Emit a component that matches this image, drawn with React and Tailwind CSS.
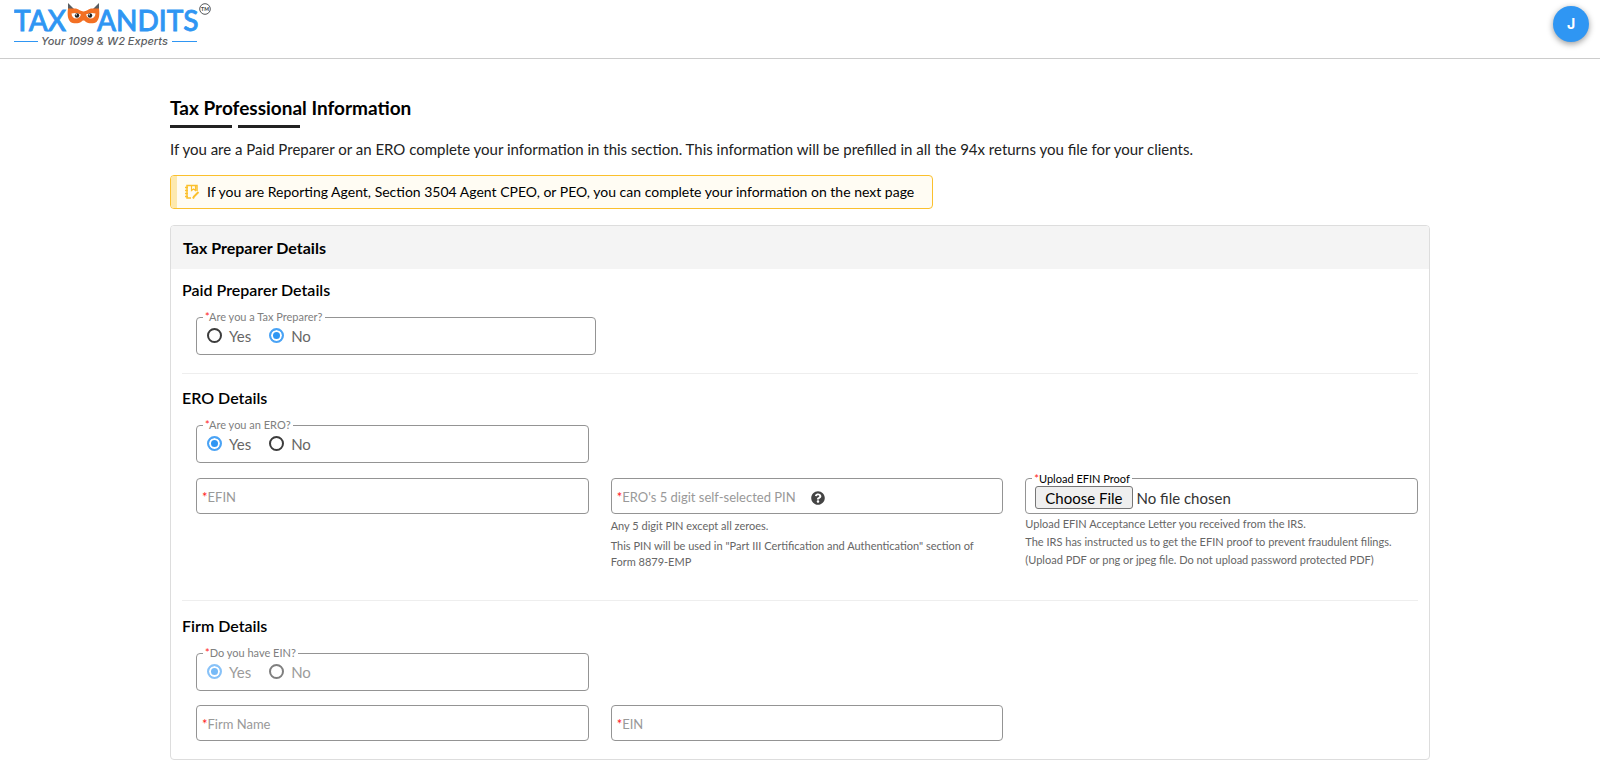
import React, { useState } from 'react';
import { FaQuestionCircle } from 'react-icons/fa';

const Required = () => <span className="text-[#ff1a1a]">*</span>;

const Logo = () => (
  <a href="#" aria-label="TaxBandits home" className="block">
    <svg width="200" height="48" viewBox="0 0 200 48" fontFamily="Lato, sans-serif">
      <g fill="#2f96f3" stroke="#2f96f3" strokeWidth="0.8" fontSize="28" fontWeight="500">
        <text x="0" y="31">TAX</text>
        <text x="83" y="31">ANDITS</text>
      </g>
      {/* owl mask */}
      <path d="M54 3l4 4 2 2h-6zM85 3l-4 4-2 2h6z" fill="#5a5d60" />
      <path
        d="M54 8.500h8c3 .5 4.500 3 7.500 3s4.500-2.500 7.500-3h8c.8 6 .3 10.500-2.500 13.500-1.500 1.500-8.500 1.800-10.500 0-.8-.8-1.500-1.500-2.500-1.500s-1.700.7-2.500 1.500c-2 1.800-9 1.500-10.500 0-2.800-3-3.300-7.500-2.500-13.500z"
        fill="#f37024"
      />
      <path d="M57.500 13.500c3-1 6.500-.8 9.500 1-.8 2.800-2.800 4-4.700 4-2.600 0-4.600-1.700-4.800-5zM81.500 13.500c-3-1-6.500-.8-9.500 1 .8 2.800 2.800 4 4.700 4 2.600 0 4.600-1.700 4.800-5z" fill="#fff" />
      <circle cx="63" cy="15.500" r="2.200" fill="#222" />
      <circle cx="76" cy="15.500" r="2.200" fill="#222" />
      <circle cx="62.200" cy="14.700" r="0.700" fill="#fff" />
      <circle cx="75.200" cy="14.700" r="0.700" fill="#fff" />
      <circle cx="191" cy="9" r="5.300" fill="none" stroke="#55585b" strokeWidth="1" />
      <text x="191" y="11" textAnchor="middle" fontSize="5" fontWeight="900" fill="#44474a">TM</text>
      <path d="M0 41.500h24M158 41.500h25" stroke="#2f96f3" strokeWidth="1" />
      <text x="27" y="45" fontSize="11" fontStyle="italic" fontWeight="500" fontFamily="Inter, sans-serif" fill="#5d6063">
        Your 1099 &amp; W2 Experts
      </text>
    </svg>
  </a>
);

const NoteIcon = () => (
  <svg width="16" height="16" viewBox="0 0 16 16" fill="none" stroke="#fbc02d" strokeWidth="1.500">
    <path d="M13 7V1.500H3V14h4" />
    <path d="M7.500 1v5.500L9.500 5l2 1.500V1" strokeWidth="1.200" />
    <path d="M1 3.500h3M1 6.500h3M1 9.500h3M1 12.500h3" />
    <path d="M9 14.500l1-2 4.500-4.500" strokeWidth="2" />
  </svg>
);

const RadioField = ({ name, label, value, onChange, disabled = false, className = '' }) => (
  <fieldset disabled={disabled} className={`min-w-0 rounded border border-[#949494] pb-2 pl-[10px] ${className}`}>
    <legend className="-ml-1 px-[2px] text-[11px] leading-4 text-[#808080]">
      <Required />{label}
    </legend>
    <div className="flex h-[21px] items-center gap-[18px]">
      {['Yes', 'No'].map((option) => (
        <label key={option} className={`flex items-center gap-[7px] text-[15px] leading-5 text-[#666] ${disabled ? 'opacity-65' : ''}`}>
          <input
            type="radio"
            name={name}
            checked={value === option}
            onChange={() => onChange(option)}
            className="h-[15px] w-[15px] appearance-none rounded-full border-2 border-[#3c3c3c] checked:border-[#4aa3f5] checked:bg-[#2f96f3] checked:shadow-[inset_0_0_0_2px_white]"
          />
          {option}
        </label>
      ))}
    </div>
  </fieldset>
);

const TextField = ({ id, label, children }) => {
  const [value, setValue] = useState('');

  return (
    <div className="relative">
      <input
        id={id}
        type="text"
        value={value}
        onChange={(e) => setValue(e.target.value)}
        className="block h-9 w-full rounded border border-[#949494] px-[6px] text-[13px] focus:border-[#2f96f3] focus:outline-none"
      />
      {!value && (
        <div className="pointer-events-none absolute inset-x-[6px] inset-y-0 flex items-center gap-[15px] pt-1 text-[13px] text-[#999]">
          <label htmlFor={id}>
            <Required />{label}
          </label>
          {children}
        </div>
      )}
    </div>
  );
};

const SectionTitle = ({ children }) => (
  <h3 className="mb-[7px] text-base leading-6 font-semibold text-black">{children}</h3>
);

const App = () => {
  const [preparer, setPreparer] = useState('No');
  const [ero, setEro] = useState('Yes');
  const [hasEin, setHasEin] = useState('Yes');

  return (
    <div className="min-h-screen bg-white font-[Lato,sans-serif] text-black">
      <header className="flex h-[59px] items-start justify-between border-b border-[#ccc] pr-[11px] pl-[14px]">
        <Logo />
        <button
          type="button"
          className="mt-[6px] h-9 w-9 rounded-full bg-[#2f96f3] font-[Inter,sans-serif] text-sm font-bold text-white shadow-[0_2px_6px_rgba(0,0,0,0.4)]"
        >
          J
        </button>
      </header>

      <main className="mx-auto max-w-[1260px] pt-[37px] pb-3">
        <h1 className="text-[19px] leading-6 font-bold">Tax Professional Information</h1>
        <div className="mt-[5px] flex gap-[6px]">
          <span className="h-[3px] w-[62px] bg-[#222]" />
          <span className="h-[3px] w-[62px] bg-[#222]" />
        </div>
        <p className="mt-[9px] text-[15px] leading-6 text-[#222]">
          If you are a Paid Preparer or an ERO complete your information in this section. This information will be
          prefilled in all the 94x returns you file for your clients.
        </p>

        <div className="mt-[14px] flex h-[34px] w-fit items-center overflow-hidden rounded border border-[#fbc02d] bg-[#fffcf3] pr-[18px]">
          <span className="mr-[7px] h-full w-[6px] bg-[#fde9ae]" />
          <NoteIcon />
          <p className="ml-[7px] text-sm leading-5">
            If you are Reporting Agent, Section 3504 Agent CPEO, or PEO, you can complete your information on the next page
          </p>
        </div>

        <div className="mt-4 overflow-hidden rounded border border-[#ddd]">
          <h2 className="bg-[#f4f4f4] px-3 py-[11px] text-base leading-[21px] font-bold">Tax Preparer Details</h2>

          <form className="px-[11px]">
            <section className="border-b border-[#eee] pt-[9px] pb-[18px]">
              <SectionTitle>Paid Preparer Details</SectionTitle>
              <RadioField
                name="preparer"
                label="Are you a Tax Preparer?"
                value={preparer}
                onChange={setPreparer}
                className="ml-[14px] max-w-[400px]"
              />
            </section>

            <section className="border-b border-[#eee] pt-3 pb-[30px]">
              <SectionTitle>ERO Details</SectionTitle>
              <div className="ml-[14px] grid grid-cols-3 gap-x-[22px] gap-y-[15px]">
                <RadioField name="ero" label="Are you an ERO?" value={ero} onChange={setEro} />
                <div className="col-start-1">
                  <TextField id="efin" label="EFIN" />
                </div>
                <div>
                  <TextField id="pin" label="ERO's 5 digit self-selected PIN">
                    <FaQuestionCircle className="text-sm text-[#444]" />
                  </TextField>
                  <div className="mt-1 pr-4 text-[11px] leading-4 text-[#666]">
                    <p>Any 5 digit PIN except all zeroes.</p>
                    <p className="mt-1">
                      This PIN will be used in "Part III Certification and Authentication" section of Form 8879-EMP
                    </p>
                  </div>
                </div>
                <div>
                  <fieldset className="-mt-[7px] min-w-0 rounded border border-[#949494] pb-1 pl-[9px]">
                    <legend className="-ml-[3px] px-[2px] text-[11px] leading-[15px]">
                      <label htmlFor="proof"><Required />Upload EFIN Proof</label>
                    </legend>
                    <input
                      id="proof"
                      type="file"
                      className="block h-[23px] w-full text-[15px] leading-5 text-[#333] file:mr-1 file:h-[23px] file:rounded-[3px] file:border file:border-solid file:border-[#767676] file:bg-[#efefef] file:px-[9px] file:text-black"
                    />
                  </fieldset>
                  <div className="mt-[1px] text-[11px] leading-[18px] text-[#666]">
                    <p>Upload EFIN Acceptance Letter you received from the IRS.</p>
                    <p>The IRS has instructed us to get the EFIN proof to prevent fraudulent filings.</p>
                    <p>(Upload PDF or png or jpeg file. Do not upload password protected PDF)</p>
                  </div>
                </div>
              </div>
            </section>

            <section className="pt-[13px] pb-[18px]">
              <SectionTitle>Firm Details</SectionTitle>
              <div className="ml-[14px] grid grid-cols-3 gap-x-[22px] gap-y-[14px]">
                <RadioField name="ein-choice" label="Do you have EIN?" value={hasEin} onChange={setHasEin} disabled />
                <div className="col-start-1">
                  <TextField id="firm" label="Firm Name" />
                </div>
                <TextField id="ein" label="EIN" />
              </div>
            </section>
          </form>
        </div>
      </main>
    </div>
  );
};

export default App;
